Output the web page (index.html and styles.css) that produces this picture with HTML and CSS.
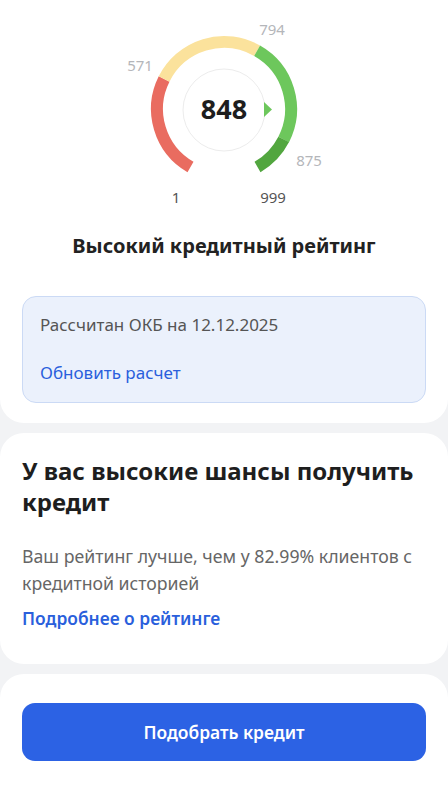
FILE: index.html
```html
<!DOCTYPE html>
<html lang="ru">
<head>
  <meta charset="UTF-8">
  <meta name="viewport" content="width=device-width, initial-scale=1.0">
  <title>Кредитный рейтинг</title>
  <link rel="stylesheet" href="styles.css">
</head>
<body>
  <div class="page">
    <section class="card score-card">
      <svg class="gauge" width="240" height="212" viewBox="0 0 240 212" aria-label="Рейтинг 848">
        <path class="seg seg-red" d="M86.5 167 A67 67 0 0 1 60.1 79"/>
        <path class="seg seg-yellow" d="M60.1 79 A67 67 0 0 1 153.1 50.7"/>
        <path class="seg seg-green" d="M153.1 50.7 A67 67 0 0 1 179.7 139.4"/>
        <path class="seg seg-dark" d="M179.7 139.4 A67 67 0 0 1 153.5 167"/>
        <circle class="inner" cx="120" cy="110" r="41"/>
        <text class="score" x="120" y="119">848</text>
        <polygon class="pointer" points="160,102 168,109.5 160,117"/>
        <text class="mark" x="36" y="71">571</text>
        <text class="mark" x="168" y="35">794</text>
        <text class="mark" x="205" y="166">875</text>
        <text class="mark mark-dark" x="72" y="203">1</text>
        <text class="mark mark-dark" x="169" y="203">999</text>
      </svg>
      <h1 class="score-title">Высокий кредитный рейтинг</h1>
      <div class="info-box">
        <div class="info-text">Рассчитан ОКБ на 12.12.2025</div>
        <a class="link" href="#">Обновить расчет</a>
      </div>
    </section>

    <section class="card chance-card">
      <h2 class="chance-title">У вас высокие шансы получить кредит</h2>
      <p class="chance-text">Ваш рейтинг лучше, чем у 82.99% клиентов с кредитной историей</p>
      <a class="link link-bold" href="#">Подробнее о рейтинге</a>
    </section>

    <section class="card action-card">
      <button class="btn-primary">Подобрать кредит</button>
    </section>
  </div>
</body>
</html>
```

FILE: styles.css
```css
body {
  margin: 0;
  background-color: #f2f3f5;
  font-family: "Noto Sans", "Open Sans", sans-serif;
  color: #222;
}

.page {
  display: flex;
  flex-direction: column;
  gap: 10px;
}

.card {
  background-color: #fff;
  border-radius: 24px;
  padding: 0 22px;
}

.score-card {
  border-radius: 0 0 24px 24px;
  padding-bottom: 20px;
}

.gauge {
  display: block;
  margin: 0 auto;
}

.seg {
  fill: none;
  stroke-width: 12;
}

.seg-red { stroke: #e96c60; }
.seg-yellow { stroke: #fbe29c; }
.seg-green { stroke: #6dc75c; }
.seg-dark { stroke: #52a63f; }

.inner {
  fill: #fff;
  stroke: #ececec;
  stroke-width: 1;
}

.score {
  font-size: 27px;
  font-weight: 700;
  fill: #1e1e1e;
  text-anchor: middle;
}

.pointer {
  fill: #6dc75c;
}

.mark {
  font-size: 15px;
  fill: #b4b6ba;
  text-anchor: middle;
}

.mark-dark {
  fill: #555;
}

.score-title {
  margin: 20px 0 37px;
  font-size: 20px;
  font-weight: 700;
  text-align: center;
  color: #222;
}

.info-box {
  background-color: #ebf1fc;
  border: 1px solid #cbdaf5;
  border-radius: 14px;
  padding: 16px 17px 17px;
}

.info-text {
  font-size: 17px;
  color: #555;
  line-height: 24px;
  margin-bottom: 24px;
}

.link {
  display: block;
  font-size: 17px;
  line-height: 24px;
  color: #2a5fdc;
  text-decoration: none;
}

.link-bold {
  font-weight: 600;
  font-size: 17.4px;
}

.chance-card {
  padding-top: 22px;
  padding-bottom: 34px;
}

.chance-title {
  margin: 0 0 26px;
  font-size: 24px;
  line-height: 31px;
  font-weight: 700;
  color: #1e1e1e;
}

.chance-text {
  margin: 0 0 9px;
  font-size: 17.7px;
  line-height: 27px;
  color: #666;
}

.action-card {
  border-radius: 24px 24px 0 0;
  padding-top: 29px;
  padding-bottom: 40px;
}

.btn-primary {
  display: block;
  width: 100%;
  height: 58px;
  border: none;
  border-radius: 13px;
  background-color: #2c62e4;
  color: #fff;
  font-family: inherit;
  font-size: 17.4px;
  font-weight: 600;
  cursor: pointer;
}
```
